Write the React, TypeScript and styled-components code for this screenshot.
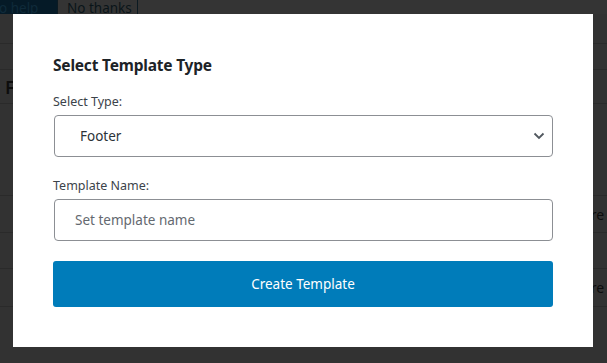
import React from 'react'
import styled, { createGlobalStyle } from 'styled-components'

const GlobalStyle = createGlobalStyle`
    html, body {
        margin: 0;
        padding: 0;
        background: #323232;
    }
    body {
        font-family: 'Noto Sans', 'Open Sans', sans-serif;
    }
`

const components = {
    Page: styled.div`
        position: relative;
        width: 607px;
        height: 363px;
        overflow: hidden;
        background-color: #323232;
    `,
    NoticeBar: styled.div`
        display: flex;
        align-items: flex-start;
        height: 14px;
        overflow: hidden;
        background-color: #343434;
    `,
    NoticeButton: styled.div<{ primary?: boolean }>`
        flex-shrink: 0;
        margin-top: -4px;
        height: 30px;
        line-height: 22px;
        box-sizing: border-box;
        white-space: nowrap;
        font-size: 13.5px;
        color: ${(p) => (p.primary ? '#0f2a3a' : '#0a1419')};
        background-color: ${(p) => (p.primary ? '#051a27' : 'transparent')};
        border: 1px solid ${(p) => (p.primary ? '#051a27' : '#0b1a22')};
        border-radius: 3px;
        ${(p) =>
            p.primary
                ? 'margin-left: -6px; width: 63px; padding-left: 4px;'
                : 'width: 81px; padding-left: 9px;'}
    `,
    Table: styled.div`
        display: flex;
        flex-direction: column;
    `,
    Row: styled.div<{ h: number }>`
        display: flex;
        align-items: center;
        height: ${(p) => p.h}px;
        box-sizing: border-box;
        border-bottom: 1px solid #2a2a2a;
        padding: 0 0 0 5px;
        font-size: 13px;
        color: #101010;
        white-space: nowrap;
    `,
    Heading: styled.span`
        font-size: 18px;
        font-weight: 600;
        color: #0d0d0d;
    `,
    Trail: styled.span`
        margin-left: 578px;
        font-size: 14px;
        color: #0d0d0d;
    `,
    Modal: styled.div`
        position: absolute;
        left: 13px;
        top: 14px;
        width: 580px;
        height: 333px;
        box-sizing: border-box;
        padding: 40px 40px;
        background: #ffffff;
        display: flex;
        flex-direction: column;
    `,
    Title: styled.h2`
        flex-shrink: 0;
        margin: 0 0 17px;
        font-size: 15.5px;
        line-height: 22px;
        font-weight: 700;
        color: #1d2327;
        letter-spacing: -0.2px;
    `,
    Label: styled.label`
        flex-shrink: 0;
        display: block;
        font-size: 12.5px;
        line-height: 18px;
        color: #3c434a;
        margin-bottom: 4px;
    `,
    Field: styled.div`
        flex-shrink: 0;
        margin-left: 1px;
        margin-bottom: 20px;
        height: 42px;
        box-sizing: border-box;
        border: 1px solid #8c8f94;
        border-radius: 4px;
        display: flex;
        align-items: center;
        justify-content: space-between;
        padding: 0 7px 0 25px;
        font-size: 13.5px;
        color: #2c3338;
    `,
    Placeholder: styled.span`
        margin-left: -5px;
        color: #646970;
    `,
    Button: styled.button`
        flex-shrink: 0;
        margin-top: 0;
        height: 46px;
        width: 100%;
        border: none;
        border-radius: 3px;
        background-color: #007cba;
        color: #ffffff;
        font-family: inherit;
        font-size: 13.5px;
        cursor: pointer;
    `
}

const Chevron = () => (
    <svg width="12" height="8" viewBox="0 0 12 8">
        <path d="M1.5 1.5 L6 6 L10.5 1.5" fill="none" stroke="#50575e" strokeWidth="1.8" />
    </svg>
)

export default class App extends React.Component {
    public render() {
        return (
            <components.Page>
                <GlobalStyle />
                {this.renderBackdrop()}
                {this.renderModal()}
            </components.Page>
        )
    }
    public renderBackdrop() {
        return (
            <div>
                <components.NoticeBar>
                    <components.NoticeButton primary>o help</components.NoticeButton>
                    <components.NoticeButton>No thanks</components.NoticeButton>
                </components.NoticeBar>
                <components.Table>
                    <components.Row h={30} />
                    <components.Row h={26} />
                    <components.Row h={34}>
                        <components.Heading>F</components.Heading>
                    </components.Row>
                    <components.Row h={92} />
                    <components.Row h={37}>
                        <components.Trail>are t</components.Trail>
                    </components.Row>
                    <components.Row h={36} />
                    <components.Row h={38}>
                        <components.Trail>are t</components.Trail>
                    </components.Row>
                </components.Table>
            </div>
        )
    }
    public renderModal() {
        return (
            <components.Modal>
                <components.Title>Select Template Type</components.Title>
                <components.Label>Select Type:</components.Label>
                <components.Field>
                    <span>Footer</span>
                    <Chevron />
                </components.Field>
                <components.Label>Template Name:</components.Label>
                <components.Field>
                    <components.Placeholder>Set template name</components.Placeholder>
                </components.Field>
                <components.Button>Create Template</components.Button>
            </components.Modal>
        )
    }
}
